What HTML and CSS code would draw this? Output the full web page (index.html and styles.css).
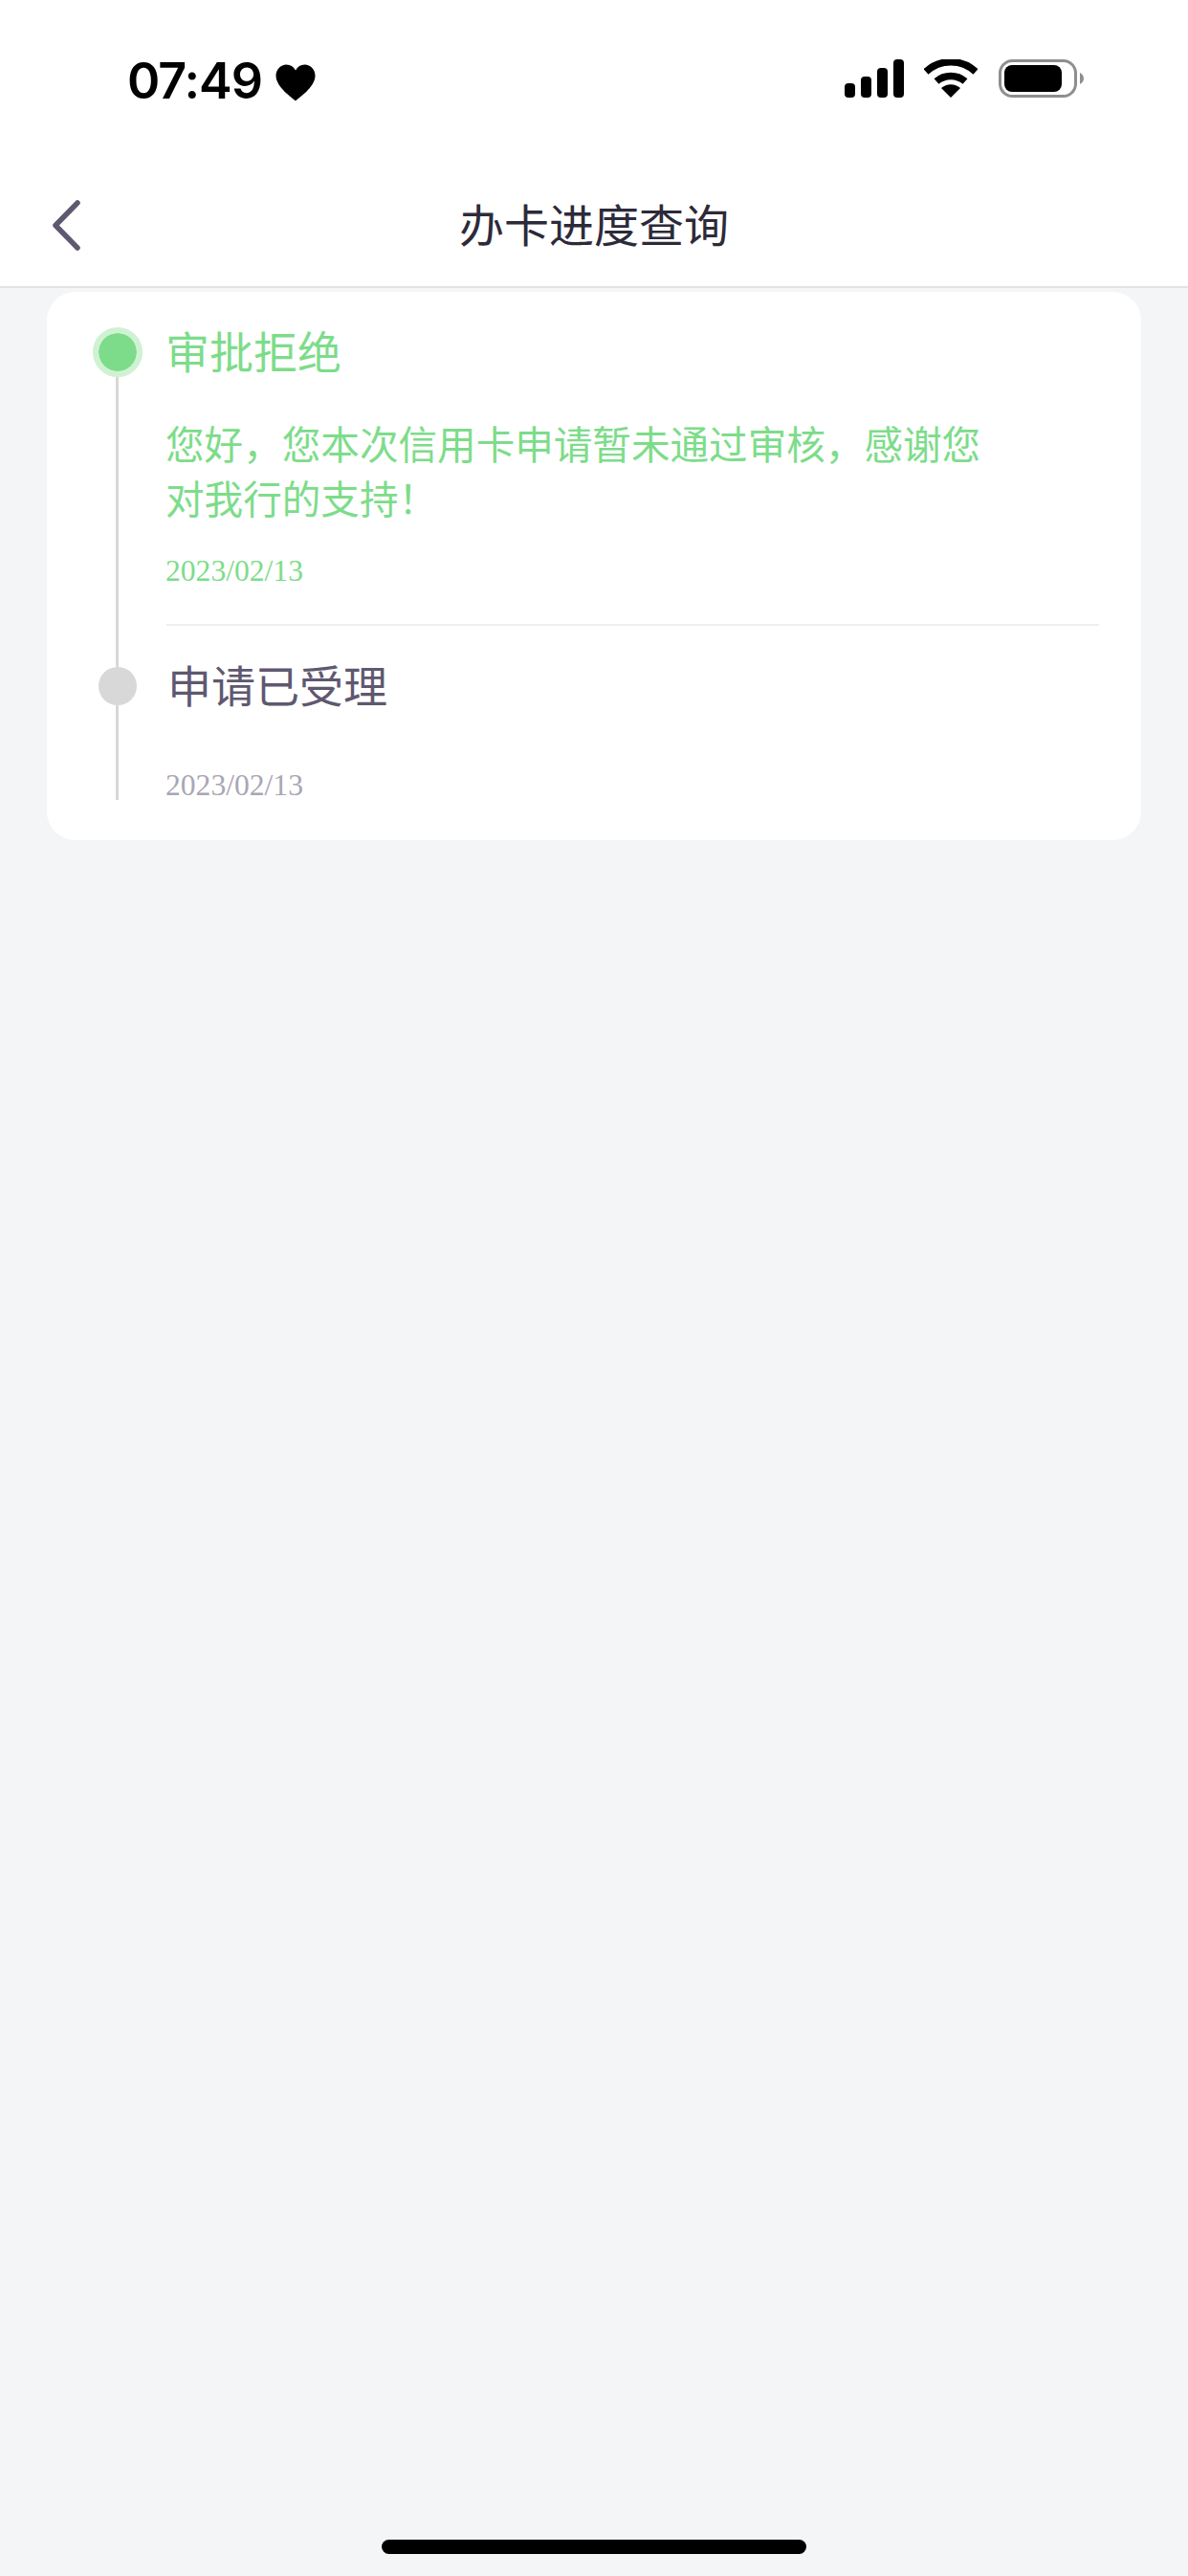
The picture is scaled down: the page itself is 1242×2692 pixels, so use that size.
FILE: index.html
```html
<!DOCTYPE html>
<html lang="zh-CN">
<head>
<meta charset="utf-8">
<title>办卡进度查询</title>
<link rel="stylesheet" href="styles.css">
</head>
<body>
<div class="phone">
  <header class="top">
    <div class="status">
      <div class="status-left">
        <span class="time">07:49</span>
        <svg class="heart" width="42" height="39" viewBox="0 0 42 38"><path d="M21 38C18 35 1 24 0.5 12C0.3 5 5.5 0 11.5 0C15.5 0 19 2 21 6C23 2 26.5 0 30.5 0C36.5 0 41.7 5 41.5 12C41 24 24 35 21 38Z" fill="#000"/></svg>
      </div>
      <div class="status-right">
        <svg width="62" height="40" viewBox="0 0 62 40"><g fill="#000"><rect x="0" y="25" width="11" height="15" rx="4"/><rect x="17" y="18" width="11" height="22" rx="4"/><rect x="34" y="9" width="11" height="31" rx="4"/><rect x="51" y="0" width="11" height="40" rx="4"/></g></svg>
        <svg width="56" height="40" viewBox="0 0 56 40"><path d="M2 13A38 38 0 0 1 54 13" fill="none" stroke="#000" stroke-width="7.5"/><path d="M13 23A23 23 0 0 1 43 23" fill="none" stroke="#000" stroke-width="7.5"/><path d="M18 30A15 15 0 0 1 38 30L28 40Z" fill="#000"/></svg>
        <svg width="90" height="40" viewBox="0 0 90 40"><rect x="2.5" y="1.5" width="79" height="37" rx="13" fill="none" stroke="#8e8e8e" stroke-width="3"/><rect x="7" y="6" width="60" height="28" rx="8" fill="#000"/><path d="M86 14C88 15 90 17 90 20C90 23 88 25 86 26Z" fill="#8e8e8e"/></svg>
      </div>
    </div>
    <nav class="nav">
      <svg class="back" width="34" height="54" viewBox="0 0 34 54"><path d="M28 3L5 26.500L28 50" fill="none" stroke="#5f5870" stroke-width="5.500" stroke-linecap="round" stroke-linejoin="round"/></svg>
      <h1 class="nav-title">办卡进度查询</h1>
    </nav>
  </header>
  <main class="content">
    <section class="card">
      <article class="step step-active">
        <div class="rail">
          <span class="dot dot-active"></span>
          <span class="line"></span>
        </div>
        <div class="step-body step-body-divided">
          <h2 class="step-title title-active">审批拒绝</h2>
          <p class="step-text">您好，您本次信用卡申请暂未通过审核，感谢您<br>对我行的支持！</p>
          <time class="date date-active">2023/02/13</time>
        </div>
      </article>
      <article class="step">
        <div class="rail">
          <span class="line line-short"></span>
          <span class="dot"></span>
          <span class="line"></span>
        </div>
        <div class="step-body">
          <h2 class="step-title title-second">申请已受理</h2>
          <time class="date date-second">2023/02/13</time>
        </div>
      </article>
    </section>
  </main>
  <div class="home-wrap"><span class="home"></span></div>
</div>
</body>
</html>
```
FILE: styles.css
```css
* { box-sizing: border-box; margin: 0; padding: 0; }
html, body { width: 1242px; height: 2692px; overflow: hidden; }
body { font-family: "Noto Sans CJK SC", "Noto Sans", sans-serif; background: #f4f5f7; }
.phone { width: 1242px; height: 2692px; display: flex; flex-direction: column; }
.top { height: 301px; background: #fff; border-bottom: 2px solid #e2e2e4; flex: none; display: flex; flex-direction: column; }
.status { height: 170px; padding: 62px 109px 0 133px; display: flex; justify-content: space-between; align-items: flex-start; }
.status-left { display: flex; align-items: center; gap: 14px; }
.time { font-family: Inter, sans-serif; font-weight: 600; font-size: 52px; line-height: 46px; color: #000; letter-spacing: -1px; }
.heart { margin-top: 2px; }
.status-right { display: flex; align-items: center; gap: 21px; }
.nav { flex: 1; position: relative; display: flex; align-items: center; justify-content: center; }
.back { position: absolute; left: 53px; top: 39px; }
.nav-title { font-size: 47px; font-weight: 400; color: #2d2a3a; line-height: 60px; margin-top: -4px; }
.content { flex: 1; padding: 4px 49px 0; }
.card { background: #fff; border-radius: 30px; height: 573px; padding: 37px 44px 0 0; display: flex; flex-direction: column; }
.step { display: flex; }
.rail { width: 125px; margin-left: 11px; margin-right: -11px; display: flex; flex-direction: column; align-items: center; flex: none; }
.dot { width: 40px; height: 40px; border-radius: 50%; background: #d8d8d8; flex: none; }
.dot-active { width: 52px; height: 52px; background: #7ddc8a; border: 6px solid #cff2d3; background-clip: padding-box; }
.line { width: 3px; flex: 1; background: #d8d8d8; }
.line-short { flex: none; height: 43px; }
.step-body { flex: 1; }
.step-body-divided { height: 312px; border-bottom: 2px solid #efefef; }
.step-title { font-size: 46px; font-weight: 400; line-height: 52px; color: #5f5870; }
.title-active { color: #7ddc8a; margin-top: -3px; margin-left: -1px; }
.title-second { margin-top: 34px; margin-left: 1px; }
.step-text { margin-top: 43px; margin-left: -1px; width: 880px; font-size: 40.6px; line-height: 57px; color: #7ddc8a; }
.date { display: block; font-family: "Liberation Serif", serif; font-size: 31.6px; line-height: 38px; color: #a9a6b5; margin-left: -1px; }
.date-active { color: #7ddc8a; margin-top: 30px; }
.date-second { margin-top: 66px; line-height: 30px; }
.home-wrap { height: 52px; flex: none; display: flex; justify-content: center; padding-top: 14px; }
.home { width: 444px; height: 15px; background: #000; border-radius: 8px; }
```
